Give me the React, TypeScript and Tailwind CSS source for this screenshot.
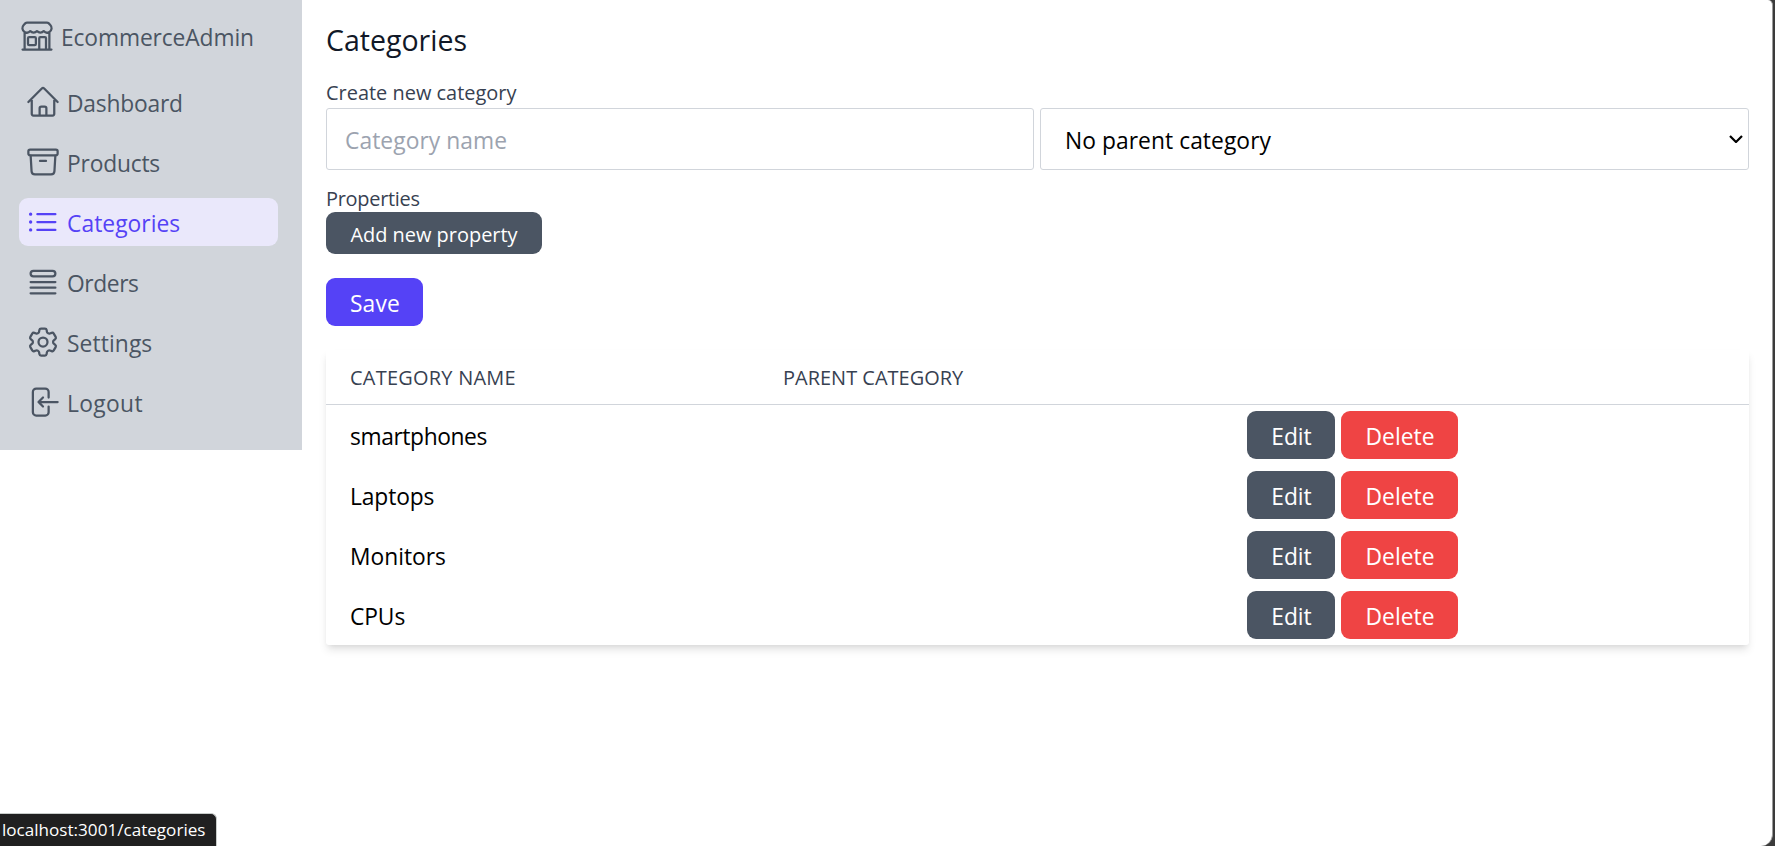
import React from "react";
import {
  HiOutlineArchiveBox,
  HiOutlineArrowLeftOnRectangle,
  HiOutlineBuildingStorefront,
  HiOutlineCog6Tooth,
  HiOutlineHome,
  HiOutlineListBullet,
  HiOutlineQueueList,
} from "react-icons/hi2";

const links = [
  { label: "Dashboard", Icon: HiOutlineHome, spacing: "tracking-[-0.2px]" },
  { label: "Products", Icon: HiOutlineArchiveBox, spacing: "tracking-[-0.2px]" },
  { label: "Categories", Icon: HiOutlineListBullet, spacing: "tracking-[0.05px]", active: true },
  { label: "Orders", Icon: HiOutlineQueueList, spacing: "tracking-[-0.4px]" },
  { label: "Settings", Icon: HiOutlineCog6Tooth, spacing: "tracking-[0.1px]" },
  { label: "Logout", Icon: HiOutlineArrowLeftOnRectangle, spacing: "tracking-[0.35px]" },
];

const categories = [
  { name: "smartphones", spacing: "tracking-[-0.4px]" },
  { name: "Laptops", spacing: "tracking-[-0.12px]" },
  { name: "Monitors", spacing: "tracking-[0px]" },
  { name: "CPUs", spacing: "tracking-[-0.1px]" },
];

function Sidebar() {
  return (
    <aside className="h-[450px] w-[302px] shrink-0 bg-[#d1d5db] pt-[18px] pr-6 pl-[19px] text-[#4b5563]">
      <div className="flex h-9 items-center gap-[6px]">
        <HiOutlineBuildingStorefront className="size-9 shrink-0" />
        <span className="pt-1 tracking-[-0.12px]">EcommerceAdmin</span>
      </div>
      <nav className="mt-6 flex flex-col gap-3">
        {links.map(({ label, Icon, spacing, active }) => (
          <a
            key={label}
            className={`flex h-12 items-center gap-[6px] rounded-[9px] px-[6px] ${active ? "bg-[#eae8fb] text-[#5542f6]" : ""}`}
          >
            <Icon className="size-9 shrink-0" />
            <span className={`pt-1 ${spacing}`}>{label}</span>
          </a>
        ))}
      </nav>
    </aside>
  );
}

function CategoryForm() {
  return (
    <form>
      <label className="block h-8 pt-px text-[19.95px] leading-8 text-[#374151]">Create new category</label>
      <div className="grid grid-cols-[708px_1fr] gap-[6px]">
        <input
          placeholder="Category name"
          className="h-[62px] w-full rounded-[3px] border border-[#d1d5db] px-[18px] pt-0.5 tracking-[0.06px] outline-none placeholder:text-[#9ca3af]"
        />
        <div className="relative">
          <select className="h-[62px] w-full appearance-none rounded-[3px] border border-[#d1d5db] bg-white pt-[3px] pr-10 pl-6 tracking-[0.06px] text-black outline-none">
            <option>No parent category</option>
          </select>
          <svg viewBox="0 0 14 8" className="pointer-events-none absolute top-[27px] right-[6px] h-2 w-[14px]" fill="none" stroke="black" strokeWidth="2.2">
            <path d="M1 1l6 6 6-6" />
          </svg>
        </div>
      </div>
      <div className="pt-3">
        <label className="block h-[30px] pt-px text-[19.95px] leading-8 tracking-[-0.28px] text-[#374151]">Properties</label>
        <button type="button" className="flex h-[42px] w-[216px] items-center justify-center rounded-[9px] bg-[#4b5563] pt-[3px] text-[19.95px] text-white">
          Add new property
        </button>
      </div>
      <button type="button" className="mt-6 flex h-12 w-[97px] items-center justify-center rounded-[9px] bg-[#5542f6] pt-1 pl-px tracking-[0.2px] text-white">
        Save
      </button>
    </form>
  );
}

function CategoryTable() {
  return (
    <div className="mt-6 rounded-[3px] bg-white shadow-[0_6px_9px_-1.5px_rgb(0_0_0/0.1),0_3px_6px_-3px_rgb(0_0_0/0.1)]">
      <div className="grid h-[55px] grid-cols-[433px_464px_1fr] items-center border-b border-[#d1d5db] pt-0.5 text-[19.95px] text-[#374151]">
        <span className="pl-6 tracking-[0.26px]">CATEGORY NAME</span>
        <span className="pl-6 tracking-[0.03px]">PARENT CATEGORY</span>
      </div>
      {categories.map(({ name, spacing }) => (
        <div key={name} className="grid h-[60px] grid-cols-[433px_464px_1fr] items-center text-black">
          <span className={`pt-[3px] pl-6 ${spacing}`}>{name}</span>
          <span />
          <div className="flex gap-[6px] pl-6 text-white">
            <button className="flex h-12 w-[88px] items-center justify-center rounded-[9px] bg-[#4b5563] pt-[3px] pl-px">Edit</button>
            <button className="flex h-12 w-[117px] items-center justify-center rounded-[9px] bg-[#ef4444] pt-[3px] pl-px tracking-[0.05px]">Delete</button>
          </div>
        </div>
      ))}
    </div>
  );
}

export default function App() {
  return (
    <div className="h-[846px] overflow-hidden bg-[#3b3b3b] pr-[2px] font-['Open_Sans',sans-serif] text-[22.8px] leading-9">
      <div className="relative flex h-[846px] items-start overflow-hidden rounded-tr-[5px] rounded-br-[12px] border-r border-[#9a9a9a] bg-white">
        <Sidebar />
        <main className="min-w-0 flex-1 pt-[22px] pr-[23px] pl-6">
          <h1 className="mb-[18px] text-[28.5px] leading-9 text-[#111827]">Categories</h1>
          <CategoryForm />
          <CategoryTable />
        </main>
        <div className="absolute bottom-0 left-0 flex h-[33px] w-[217px] items-center rounded-tr-[6px] border-t border-r border-[#c9cdcb] bg-[#202020] pl-[2px] text-[17.1px] leading-none text-white">
          localhost:3001/categories
        </div>
      </div>
    </div>
  );
}
